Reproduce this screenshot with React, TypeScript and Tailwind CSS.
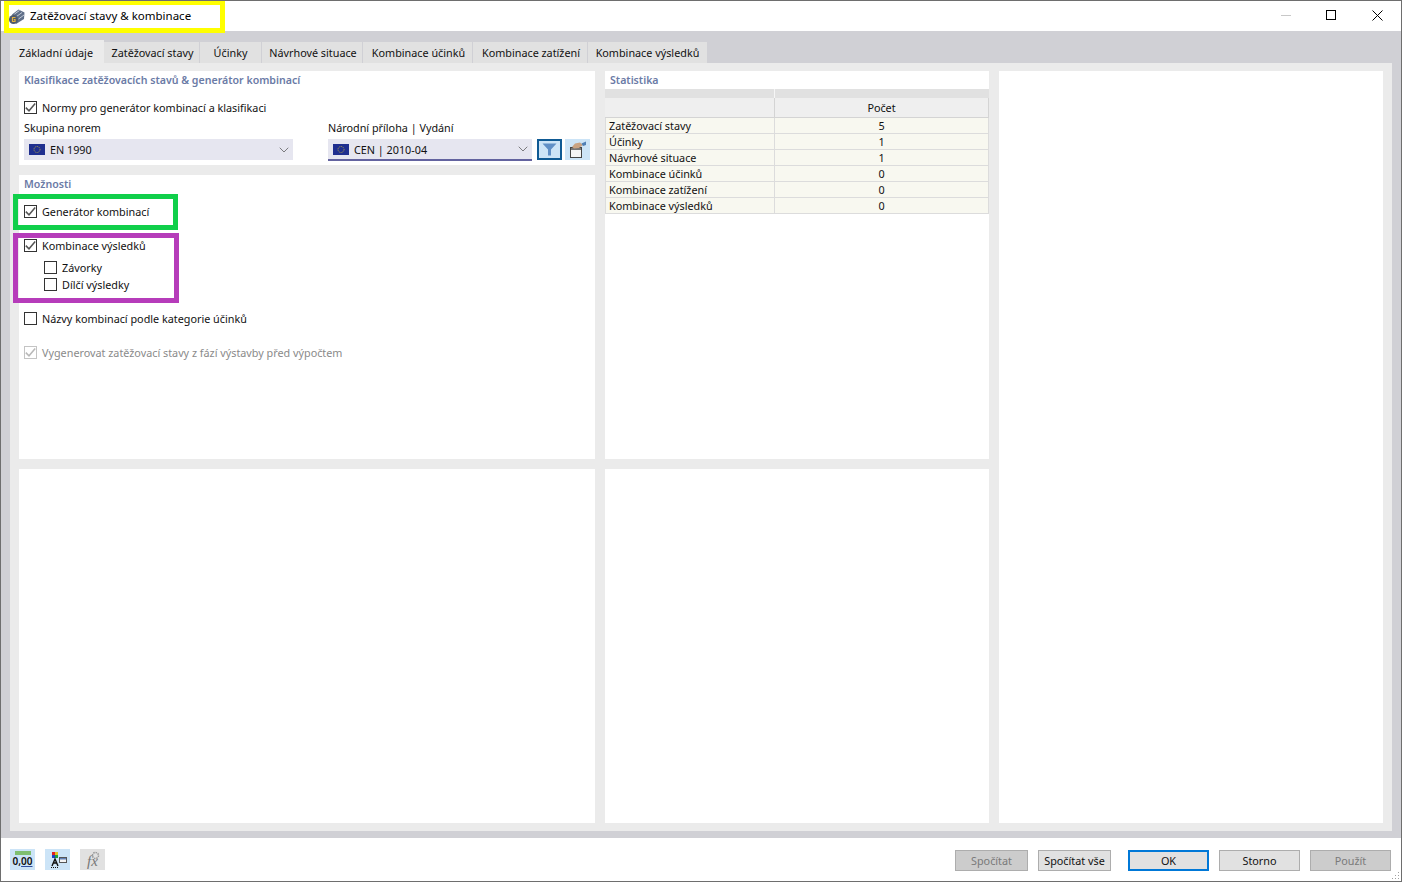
import { ChevronDown } from "lucide-react";

const tabs = [
  "Základní údaje",
  "Zatěžovací stavy",
  "Účinky",
  "Návrhové situace",
  "Kombinace účinků",
  "Kombinace zatížení",
  "Kombinace výsledků",
];
const tabWidths = [
  "w-[94px] pr-[2px]",
  "w-[96px] pl-[2px]",
  "w-[62px]",
  "w-[101px] pl-[2px]",
  "w-[110px] pl-[2px]",
  "w-[115px] pl-[2px]",
  "w-[120px]",
];

const stats: [string, number][] = [
  ["Zatěžovací stavy", 5],
  ["Účinky", 1],
  ["Návrhové situace", 1],
  ["Kombinace účinků", 0],
  ["Kombinace zatížení", 0],
  ["Kombinace výsledků", 0],
];

function Box({ checked, disabled }: { checked?: boolean; disabled?: boolean }) {
  return (
    <span
      className={`flex h-[13px] w-[13px] shrink-0 items-center justify-center border ${
        disabled ? "border-[#c4c4c4]" : "border-[#333333]"
      } bg-white`}
    >
      {checked && (
        <svg width="11" height="11" viewBox="0 0 11 11" fill="none">
          <path
            d="M0.8 5.6 L4 8.8 L10.2 1.6"
            stroke={disabled ? "#b8b8b8" : "#555555"}
            strokeWidth="1.5"
          />
        </svg>
      )}
    </span>
  );
}

function Option({
  label,
  checked,
  disabled,
  className,
}: {
  label: string;
  checked?: boolean;
  disabled?: boolean;
  className?: string;
}) {
  return (
    <div className={`flex h-[17px] items-center gap-[5px] ${className ?? ""}`}>
      <Box checked={checked} disabled={disabled} />
      <span className={disabled ? "text-[#8a8a8a]" : "text-[#111111]"}>{label}</span>
    </div>
  );
}

function EuFlag() {
  return (
    <svg width="16" height="11" viewBox="0 0 16 11" className="shrink-0">
      <rect width="16" height="11" fill="#1f2f8f" />
      <circle cx="8" cy="5.5" r="3" fill="none" stroke="#b9a94a" strokeWidth="1" strokeDasharray="1 1" />
    </svg>
  );
}

function Combo({ label, underline, className }: { label: string; underline?: boolean; className: string }) {
  return (
    <div
      className={`flex items-center bg-[#e6e6f0] pl-[5px] pr-[1px] ${
        underline ? "h-[22px] border-b-2 border-[#63639f]" : "h-[21px]"
      } ${className}`}
    >
      <EuFlag />
      <span className="ml-[5px] flex-1 text-[#111111]">{label}</span>
      <ChevronDown size={16} strokeWidth={1} className="text-[#444444]" />
    </div>
  );
}

function Heading({ children }: { children: string }) {
  return <div className="text-[10.6px] font-semibold text-[#6b7ba6]">{children}</div>;
}

export default function App() {
  return (
    <div className="flex h-[882px] w-[1402px] flex-col overflow-hidden border border-[#6e6e6e] bg-white text-[10.8px] leading-[15px] [font-family:'Noto_Sans','Open_Sans',sans-serif]">
      {/* title bar */}
      <div className="flex h-[30px] shrink-0 items-start">
        <div className="relative z-10 ml-[3px] -mt-px flex h-[33px] w-[221px] items-center border-[5px] border-[#ffff00] bg-white">
          <svg width="16" height="16" viewBox="0 0 16 16" className="shrink-0">
            <path d="M3 5.5 L9.5 0.5 L15.5 3.5 L15 10 L7 15 Z" fill="#5f6f88" />
            <path d="M5.5 5 L10.5 1.5 M7.5 7.5 L13 3.5 M9.5 10 L15 6" stroke="#c3cbd8" strokeWidth="1" />
            <circle cx="4.5" cy="10.5" r="4.5" fill="#4d5a6e" />
            <path d="M6.5 8.5 H3.5 V12.5 H6 V10.5 H4.8" fill="none" stroke="#e0b040" strokeWidth="1.2" />
          </svg>
          <span className="ml-[5px] whitespace-nowrap pb-[2px] text-[11.5px] text-black">Zatěžovací stavy &amp; kombinace</span>
        </div>
        <div className="ml-auto flex h-[28px] items-center">
          <svg width="10" height="1" viewBox="0 0 10 1" className="mr-[35px]">
            <rect width="10" height="1" fill="#c8c8c8" />
          </svg>
          <svg width="10" height="10" viewBox="0 0 10 10" className="mr-[36px]">
            <rect x="0.5" y="0.5" width="9" height="9" fill="none" stroke="#000000" strokeWidth="1" />
          </svg>
          <svg width="11" height="11" viewBox="0 0 11 11" className="mr-[18px]">
            <path d="M0.5 0.5 L10.5 10.5 M10.5 0.5 L0.5 10.5" stroke="#000000" strokeWidth="1" />
          </svg>
        </div>
      </div>

      {/* body */}
      <div className="flex h-[807px] shrink-0 flex-col bg-[#d0d0d5] pl-[9px] pr-[9px] pt-[9px]">
        <div className="flex h-[23px] shrink-0">
          {tabs.map((t, i) => (
            <div
              key={t}
              className={`flex items-center justify-center whitespace-nowrap text-[#111111] ${tabWidths[i]} ${
                i === 0 ? "bg-[#ebebeb] pt-[2px]" : "mt-[2px] border-r border-[#d0d0d5] bg-[#e1e1e1]"
              }`}
            >
              {t}
            </div>
          ))}
        </div>

        <div className="mb-[7px] flex flex-1 gap-[10px] bg-[#ebebeb] p-[8px] pl-[9px] pr-[9px]">
          {/* left column */}
          <div className="flex w-[576px] shrink-0 flex-col gap-[10px]">
            <div className="flex h-[388px] flex-col gap-[10px]">
              <div className="h-[94px] shrink-0 bg-white px-[5px] pt-[2px]">
                <Heading>Klasifikace zatěžovacích stavů &amp; generátor kombinací</Heading>
                <Option className="mt-[11px]" label="Normy pro generátor kombinací a klasifikaci" checked />
                <div className="mt-[4px] flex">
                  <div className="w-[304px]">
                    <div className="h-[15px] text-[#111111]">Skupina norem</div>
                    <Combo className="mt-[4px] w-[269px]" label="EN 1990" />
                  </div>
                  <div>
                    <div className="h-[15px] text-[#111111]">Národní příloha | Vydání</div>
                    <div className="mt-[4px] flex items-start">
                      <Combo className="w-[204px]" label="CEN | 2010-04" underline />
                      <div className="ml-[5px] flex h-[21px] w-[25px] items-center justify-center border-2 border-[#0f5a94] bg-[#cce4f7]">
                        <svg width="15" height="13" viewBox="0 0 15 13">
                          <path d="M0.5 0.5 H14.5 L9 6.5 V12.5 H6 V6.5 Z" fill="#5f8fc6" />
                        </svg>
                      </div>
                      <div className="ml-[3px] flex h-[21px] w-[25px] items-center justify-center bg-[#cce4f7]">
                        <svg width="18" height="18" viewBox="0 0 18 18">
                          <rect x="1.5" y="6.5" width="11" height="10" fill="#f4f4f4" stroke="#444444" />
                          <rect x="2" y="7" width="10" height="2" fill="#777777" />
                          <path d="M3 6 L6 2.5 L11 1.5 L14 4 L10 7 L5 7.5 Z" fill="#c9a383" />
                          <path d="M12.5 2.5 L17 0.5 V4 L14 5 Z" fill="#4f7fb5" />
                        </svg>
                      </div>
                    </div>
                  </div>
                </div>
              </div>

              <div className="flex-1 bg-white px-[5px] pt-[2px]">
                <Heading>Možnosti</Heading>
                <div className="mt-[2px] -ml-[11px] flex h-[36px] w-[165px] items-center border-[5px] border-[#10cf4a] pb-[2px] pl-[6px]">
                  <Option label="Generátor kombinací" checked />
                </div>
                <div className="mt-[3px] -ml-[11px] h-[70px] w-[166px] border-[5px] border-[#b63cba] pl-[6px]">
                  <Option className="-mt-px" label="Kombinace výsledků" checked />
                  <Option className="ml-[20px] mt-[5px]" label="Závorky" />
                  <Option className="ml-[20px]" label="Dílčí výsledky" />
                </div>
                <Option className="mt-[7px]" label="Názvy kombinací podle kategorie účinků" />
                <Option className="mt-[17px]" label="Vygenerovat zatěžovací stavy z fází výstavby před výpočtem" checked disabled />
              </div>
            </div>
            <div className="flex-1 bg-white" />
          </div>

          {/* middle column */}
          <div className="flex w-[384px] shrink-0 flex-col gap-[10px]">
            <div className="h-[388px] bg-white">
              <div className="h-[18px] pl-[5px] pt-[2px]">
                <Heading>Statistika</Heading>
              </div>
              <div className="flex h-[9px] bg-[#e1e1e1]">
                <div className="w-[170px] border-r border-[#f6f6f6]" />
              </div>
              <div className="flex h-[20px] border-b border-[#d4d4d4] bg-[#efefef] text-[#111111]">
                <div className="w-[170px] border-r border-[#d4d4d4]" />
                <div className="flex-1 pt-[2px] text-center">Počet</div>
                <div className="w-px bg-[#d4d4d4]" />
              </div>
              {stats.map(([name, n]) => (
                <div key={name} className="flex h-[16px] border-b border-[#dcdcdc] bg-[#f8f8f0] text-[#111111]">
                  <div className="w-[170px] border-l border-r border-[#dcdcdc] pl-[3px] leading-[16px]">{name}</div>
                  <div className="flex-1 text-center leading-[16px]">{n}</div>
                  <div className="w-px bg-[#dcdcdc]" />
                </div>
              ))}
            </div>
            <div className="flex-1 bg-white" />
          </div>

          {/* right column */}
          <div className="flex-1 bg-white" />
        </div>
      </div>

      {/* footer */}
      <div className="relative flex flex-1 items-start pl-[9px] pr-[10px] pt-[11px]">
        <div className="flex gap-[10px]">
          <div className="flex h-[21px] w-[25px] flex-col items-center bg-[#cce4f7] pt-[2px]">
            <div className="h-[4px] w-[16px] bg-[#7fbf6f]" />
            <span className="text-[10px] font-semibold leading-[13px] text-[#111111]">
              0,<span className="underline decoration-[#2f4f9f]">00</span>
            </span>
          </div>
          <div className="flex h-[21px] w-[25px] items-center justify-center bg-[#cce4f7]">
            <svg width="18" height="17" viewBox="0 0 18 17">
              <rect x="3" y="1" width="3" height="3" fill="#e02020" />
              <rect x="6" y="1" width="3" height="3" fill="#e0c020" />
              <rect x="3" y="4" width="3" height="3" fill="#2040c0" />
              <rect x="6" y="4" width="3" height="3" fill="#20a040" />
              <path d="M3 15 L6 8 L9 15 M4.5 12 H7.5" fill="none" stroke="#111111" strokeWidth="1.4" />
              <path d="M2 16.5 H10" stroke="#111111" strokeDasharray="1 1" />
              <rect x="10.5" y="6.5" width="7" height="5" fill="#f4f4f4" stroke="#555555" />
              <rect x="11" y="7" width="6" height="1.5" fill="#5f7fb5" />
            </svg>
          </div>
          <div className="relative flex h-[21px] w-[25px] items-center justify-center bg-[#e1e1e1]">
            <span className="pt-[3px] text-[15px] italic leading-none text-[#777777] [font-family:'Liberation_Serif',serif]">fx</span>
            <svg width="9" height="9" viewBox="0 0 9 9" className="absolute right-[5px] top-[2px]">
              <circle cx="4.5" cy="4.5" r="3" fill="none" stroke="#9a9a9a" strokeWidth="1.5" strokeDasharray="1.5 0.8" />
            </svg>
          </div>
        </div>
        <div className="ml-auto mt-px flex items-center">
          <button className="h-[21px] w-[73px] border border-[#adadad] bg-[#cccccc] text-[#7a7a7a]">Spočítat</button>
          <button className="ml-[10px] h-[21px] w-[73px] border border-[#adadad] bg-[#e1e1e1] text-[#111111]">Spočítat vše</button>
          <button className="ml-[17px] h-[21px] w-[81px] border-2 border-[#0078d7] bg-[#e1e1e1] text-[#111111]">OK</button>
          <button className="ml-[10px] h-[21px] w-[81px] border border-[#adadad] bg-[#e1e1e1] text-[#111111]">Storno</button>
          <button className="ml-[10px] h-[21px] w-[81px] border border-[#adadad] bg-[#cccccc] text-[#7a7a7a]">Použít</button>
        </div>
        <svg width="9" height="9" viewBox="0 0 9 9" className="absolute bottom-[1px] right-[1px]">
          <path d="M7 1h1v1H7zM4 4h1v1H4zM7 4h1v1H7zM1 7h1v1H1zM4 7h1v1H4zM7 7h1v1H7z" fill="#a0a0a0" />
        </svg>
      </div>
    </div>
  );
}
